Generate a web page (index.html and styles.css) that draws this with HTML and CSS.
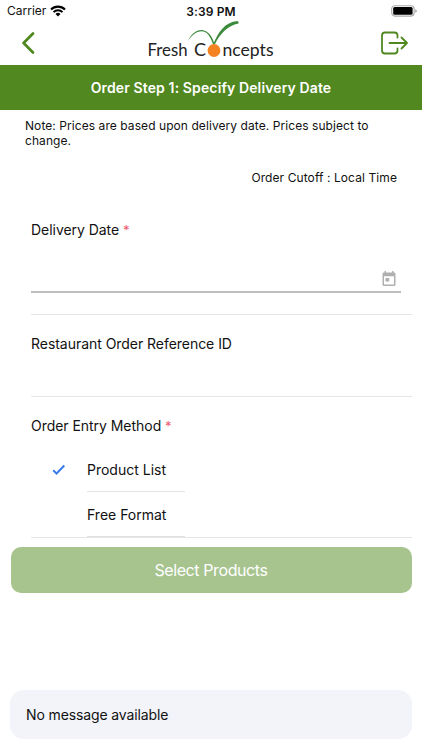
FILE: index.html
```html
<!DOCTYPE html>
<html lang="en">
<head>
    <meta charset="UTF-8">
    <meta name="viewport" content="width=device-width, initial-scale=1.0">
    <title>Fresh Concepts - Order</title>
    <link rel="stylesheet" href="styles.css">
</head>
<body>
    <div class="status-bar">
        <div class="carrier">
            <span>Carrier</span>
            <svg width="16" height="12" viewBox="0 0 16 12">
                <path d="M1 4.5A10 10 0 0 1 15 4.5" fill="none" stroke="#000" stroke-width="2.1"/>
                <path d="M3.5 7.1A6.4 6.4 0 0 1 12.5 7.1" fill="none" stroke="#000" stroke-width="2"/>
                <path d="M8 11.4L5.5 8.9A3.6 3.6 0 0 1 10.5 8.9Z"/>
            </svg>
        </div>
        <strong class="time">3:39 PM</strong>
        <svg class="battery" width="26" height="12" viewBox="0 0 26 12">
            <rect x=".7" y=".7" width="22.4" height="10.4" rx="3" fill="#fff" stroke="#aaa" stroke-width="1.1"/>
            <rect x="2.2" y="2" width="19.4" height="7.8" rx="1.5"/>
            <path d="M24.400 4.200q1.300.6 1.300 1.800t-1.300 1.800z" fill="#888"/>
        </svg>
    </div>
    <header class="header">
        <svg class="back" width="14" height="22" viewBox="0 0 14 22">
            <path d="M12 1.5L2.6 11L12 20.5" fill="none" stroke="#4f881f" stroke-width="2.7" stroke-linecap="round" stroke-linejoin="round"/>
        </svg>
        <svg class="logo" width="130" height="44" viewBox="0 0 130 44">
            <path d="M41.500 20.500C46.500 10 54 6.500 60.500 10.500C64.500 13 66.500 17 68 21.500C72.500 11.500 78.500 1 91.500 0Q93 .5 92.500 2.500C81.500 4.500 74 13 69 23H67C65 17.500 62.500 13 59.500 11.300C53.500 8 47 12.500 41.500 20.500Z" fill="#3c8b3d"/>
            <circle cx="68" cy="29.500" r="6.400" fill="#f58220"/>
            <text class="logo-text" x="1.500" y="35" textLength="40" lengthAdjust="spacingAndGlyphs">Fresh</text>
            <text class="logo-text" x="48" y="35">C</text>
            <text class="logo-text" x="76.500" y="35" textLength="51" lengthAdjust="spacingAndGlyphs">ncepts</text>
        </svg>
        <svg class="logout" width="28" height="24" viewBox="0 0 28 24">
            <path d="M17.500 6.500V4.500Q17.500 1.500 14.500 1.500H5Q2 1.500 2 4.500V19.500Q2 22.500 5 22.500H14.500Q17.500 22.500 17.500 19.500V17.500M9.500 12H27M21.500 6.500L27 12L21.500 17.500" fill="none" stroke="#4f881f" stroke-width="1.800" stroke-linecap="round" stroke-linejoin="round"/>
        </svg>
    </header>
    <h1 class="title"><span>Order Step 1: Specify Delivery Date</span></h1>
    <main>
        <p class="note">Note: Prices are based upon delivery date. Prices subject to change.</p>
        <p class="cutoff"><span>Order Cutoff : Local Time</span></p>
        <form id="orderForm">
            <div class="form-field date-field">
                <label><span>Delivery Date</span> <span class="required">*</span></label>
                <div class="date-input">
                    <svg width="14" height="16" viewBox="0 0 14 16">
                        <path d="M2.500 0H4V1.500H10V0H11.500V1.500H12.500Q13.500 1.500 13.500 3V13.500Q13.500 15 12 15H2Q.5 15 .5 13.500V3Q.5 1.500 1.500 1.500H2.500ZM2 5.300V13.600H12V5.300ZM3.500 7H7.200V10.500H3.500Z" fill="#b0b0b0" fill-rule="evenodd"/>
                    </svg>
                </div>
            </div>
            <div class="form-field reference-field">
                <label><span>Restaurant Order Reference ID</span></label>
            </div>
            <div class="form-field method-field">
                <label><span>Order Entry Method</span> <span class="required">*</span></label>
                <div class="options">
                    <svg class="check" width="14" height="12" viewBox="0 0 14 12">
                        <path d="M1.200 6.300L4.500 9.500L12.300 1.500" fill="none" stroke="#3b7de9" stroke-width="2"/>
                    </svg>
                    <div class="option"><span>Product List</span></div>
                    <div class="option"><span>Free Format</span></div>
                </div>
            </div>
            <button class="submit" type="button"><span>Select Products</span></button>
        </form>
    </main>
    <footer class="message"><span>No message available</span></footer>
</body>
</html>
```

FILE: styles.css
```css
* {
    box-sizing: border-box;
}
body {
    font-family: Inter, "Liberation Sans", sans-serif;
    font-size: 14px;
    color: #111;
    margin: 0;
    height: 750px;
    display: flex;
    flex-direction: column;
    background-color: #fff;
    overflow: hidden;
}
svg {
    display: block;
    flex-shrink: 0;
}
.status-bar {
    display: grid;
    grid-template-columns: 1fr auto 1fr;
    align-items: center;
    height: 22px;
    padding: 0 5px 0 7px;
    font-size: 12px;
}
.carrier {
    display: flex;
    gap: 4px;
}
.carrier span {
    line-height: 12px;
}
.time {
    font-weight: 600;
    letter-spacing: 0.15px;
    margin-right: 2px;
}
.battery {
    justify-self: end;
    margin-top: -1px;
}
.header {
    display: flex;
    justify-content: space-between;
    height: 43px;
    padding: 0 14px 0 21px;
}
.back {
    margin-top: 10px;
}
.logo {
    margin-left: 7px;
    margin-top: -1px;
}
.logo-text {
    font-family: Lato, sans-serif;
    font-size: 18px;
    fill: #222;
}
.logout {
    margin-top: 9px;
}
.title {
    display: flex;
    align-items: center;
    justify-content: center;
    height: 45px;
    margin: 0;
    background-color: #51881f;
    color: #fff;
    font-size: 14px;
    font-weight: 600;
    letter-spacing: 0.12px;
}
.note {
    margin: 8px 25px 0;
    font-size: 12px;
    line-height: 15px;
    letter-spacing: 0.07px;
}
.cutoff {
    margin: 22px 25px 0;
    font-size: 12px;
    line-height: 16px;
    letter-spacing: 0.09px;
    text-align: right;
}
form {
    padding: 0 10px;
    margin-top: 14px;
}
.form-field {
    margin-left: 21px;
    border-bottom: 1px solid #e6e6e8;
}
.form-field label {
    display: block;
    line-height: 20px;
    letter-spacing: -0.04px;
}
.required {
    color: #ec5a70;
    font-size: 13px;
}
.date-field {
    height: 115px;
    padding-top: 20px;
}
.date-input {
    display: flex;
    justify-content: flex-end;
    align-items: flex-end;
    height: 53px;
    margin-right: 11px;
    padding: 0 5px 4px 0;
    border-bottom: 2px solid #bebebe;
}
.reference-field {
    height: 82px;
    padding-top: 19px;
}
.method-field {
    height: 141px;
    padding-top: 19px;
}
.options {
    display: grid;
    grid-template-columns: 56px 98px;
    margin-top: 11px;
}
.check {
    align-self: center;
    justify-self: center;
}
.option {
    grid-column: 2;
    height: 45px;
    line-height: 45px;
    border-bottom: 1px solid #e2e2e4;
}
.submit {
    display: block;
    width: 401px;
    height: 46px;
    margin: 9px auto 0;
    border: 0;
    border-radius: 10px;
    background-color: #a7c48f;
    color: #fff;
    font-family: inherit;
    font-size: 16px;
    letter-spacing: -0.4px;
}
.message {
    display: flex;
    align-items: center;
    height: 49px;
    margin: auto 10px 11px;
    padding: 0 16px;
    border-radius: 14px;
    background-color: #f2f4f9;
    letter-spacing: -0.12px;
}
```
